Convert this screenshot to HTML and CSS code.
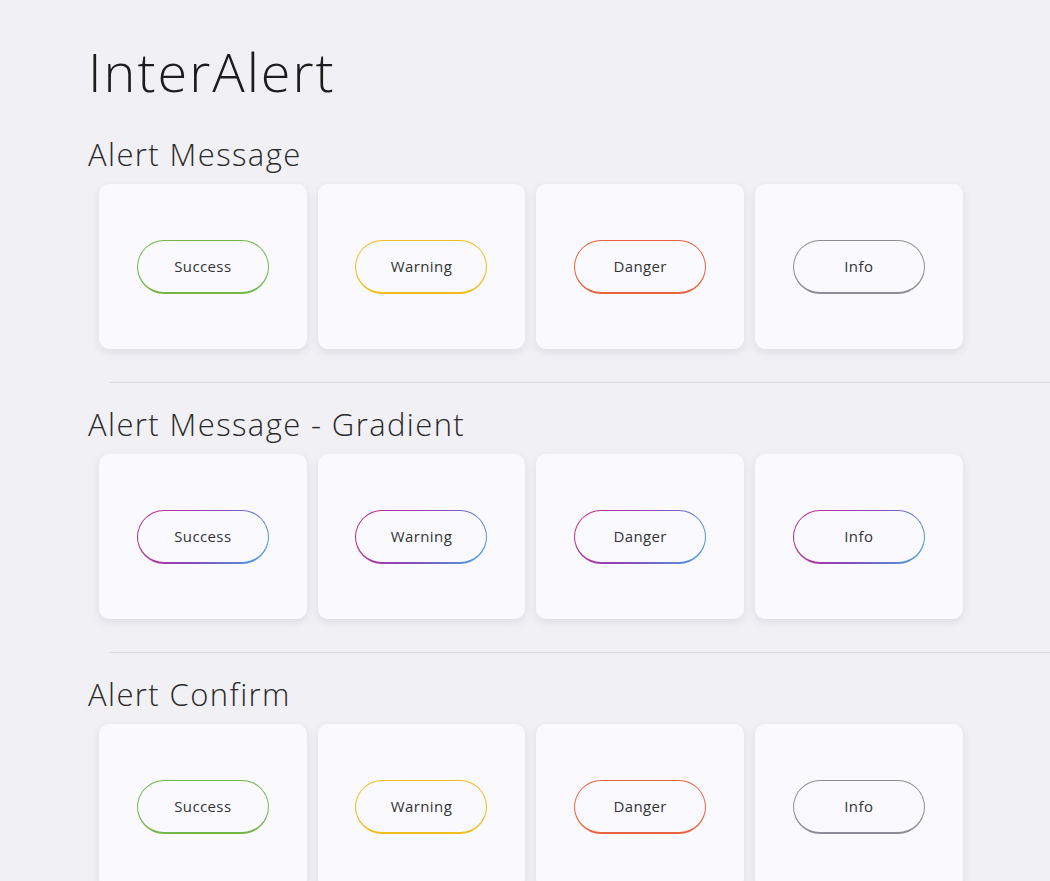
FILE: index.html
```html
<!DOCTYPE html>
<html lang="en">
<head>
<meta charset="utf-8">
<title>InterAlert</title>
<link rel="stylesheet" href="styles.css">
</head>
<body>
<main class="page">
  <h1 class="title">InterAlert</h1>

  <section class="section">
    <h2 class="heading">Alert Message</h2>
    <div class="cards">
      <div class="card"><button class="btn success">Success</button></div>
      <div class="card"><button class="btn warning">Warning</button></div>
      <div class="card"><button class="btn danger">Danger</button></div>
      <div class="card"><button class="btn info">Info</button></div>
    </div>
    <hr class="divider">
  </section>

  <section class="section">
    <h2 class="heading">Alert Message - Gradient</h2>
    <div class="cards">
      <div class="card"><button class="btn gradient">Success</button></div>
      <div class="card"><button class="btn gradient">Warning</button></div>
      <div class="card"><button class="btn gradient">Danger</button></div>
      <div class="card"><button class="btn gradient">Info</button></div>
    </div>
    <hr class="divider">
  </section>

  <section class="section">
    <h2 class="heading">Alert Confirm</h2>
    <div class="cards">
      <div class="card"><button class="btn success">Success</button></div>
      <div class="card"><button class="btn warning">Warning</button></div>
      <div class="card"><button class="btn danger">Danger</button></div>
      <div class="card"><button class="btn info">Info</button></div>
    </div>
  </section>
</main>
</body>
</html>
```
FILE: styles.css
```css
html, body {
  margin: 0;
  padding: 0;
  background: #f0f0f5;
  overflow: hidden;
}
body {
  font-family: "Open Sans", "Noto Sans", sans-serif;
  color: #222;
}
.page {
  padding-left: 88px;
  padding-top: 30px;
}
.title {
  margin: 0;
  font-size: 54px;
  font-weight: 300;
  line-height: 83px;
  color: #1c1c1c;
  letter-spacing: 2px;
}
.section {
  display: flex;
  flex-direction: column;
}
.heading {
  margin: 0;
  font-size: 31px;
  font-weight: 300;
  line-height: 44px;
  color: #2a2a2a;
  letter-spacing: 1.4px;
  margin-top: 19px;
}
.cards {
  display: flex;
  gap: 11px;
  padding-left: 11px;
  margin-top: 8px;
}
.card {
  width: 207.67px;
  height: 165px;
  flex: none;
  background: #fafafe;
  border-radius: 10px;
  box-shadow: 0 3px 8px rgba(60, 60, 90, 0.11);
  display: flex;
  align-items: center;
  justify-content: center;
}
.btn {
  width: 132px;
  height: 54px;
  border-radius: 27px;
  font-family: "Open Sans", "Noto Sans", sans-serif;
  font-size: 15px;
  letter-spacing: 0.4px;
  color: #333;
  background: #fafafe;
  border: 1px solid;
  border-bottom-width: 2px;
  padding: 0;
  cursor: pointer;
}
.success { border-color: #74b548; }
.warning { border-color: #f0be1e; }
.danger  { border-color: #e8643f; }
.info    { border-color: #8e8c96; }
.gradient {
  border-color: transparent;
  background:
    linear-gradient(#fafafe, #fafafe) padding-box,
    linear-gradient(120deg, #c8248a 0%, #8a48b8 50%, #45a6e2 100%) border-box;
}
.divider {
  border: 0;
  border-top: 1px solid #dcdce2;
  margin: 33px 0 0 22px;
  height: 0;
}
```
